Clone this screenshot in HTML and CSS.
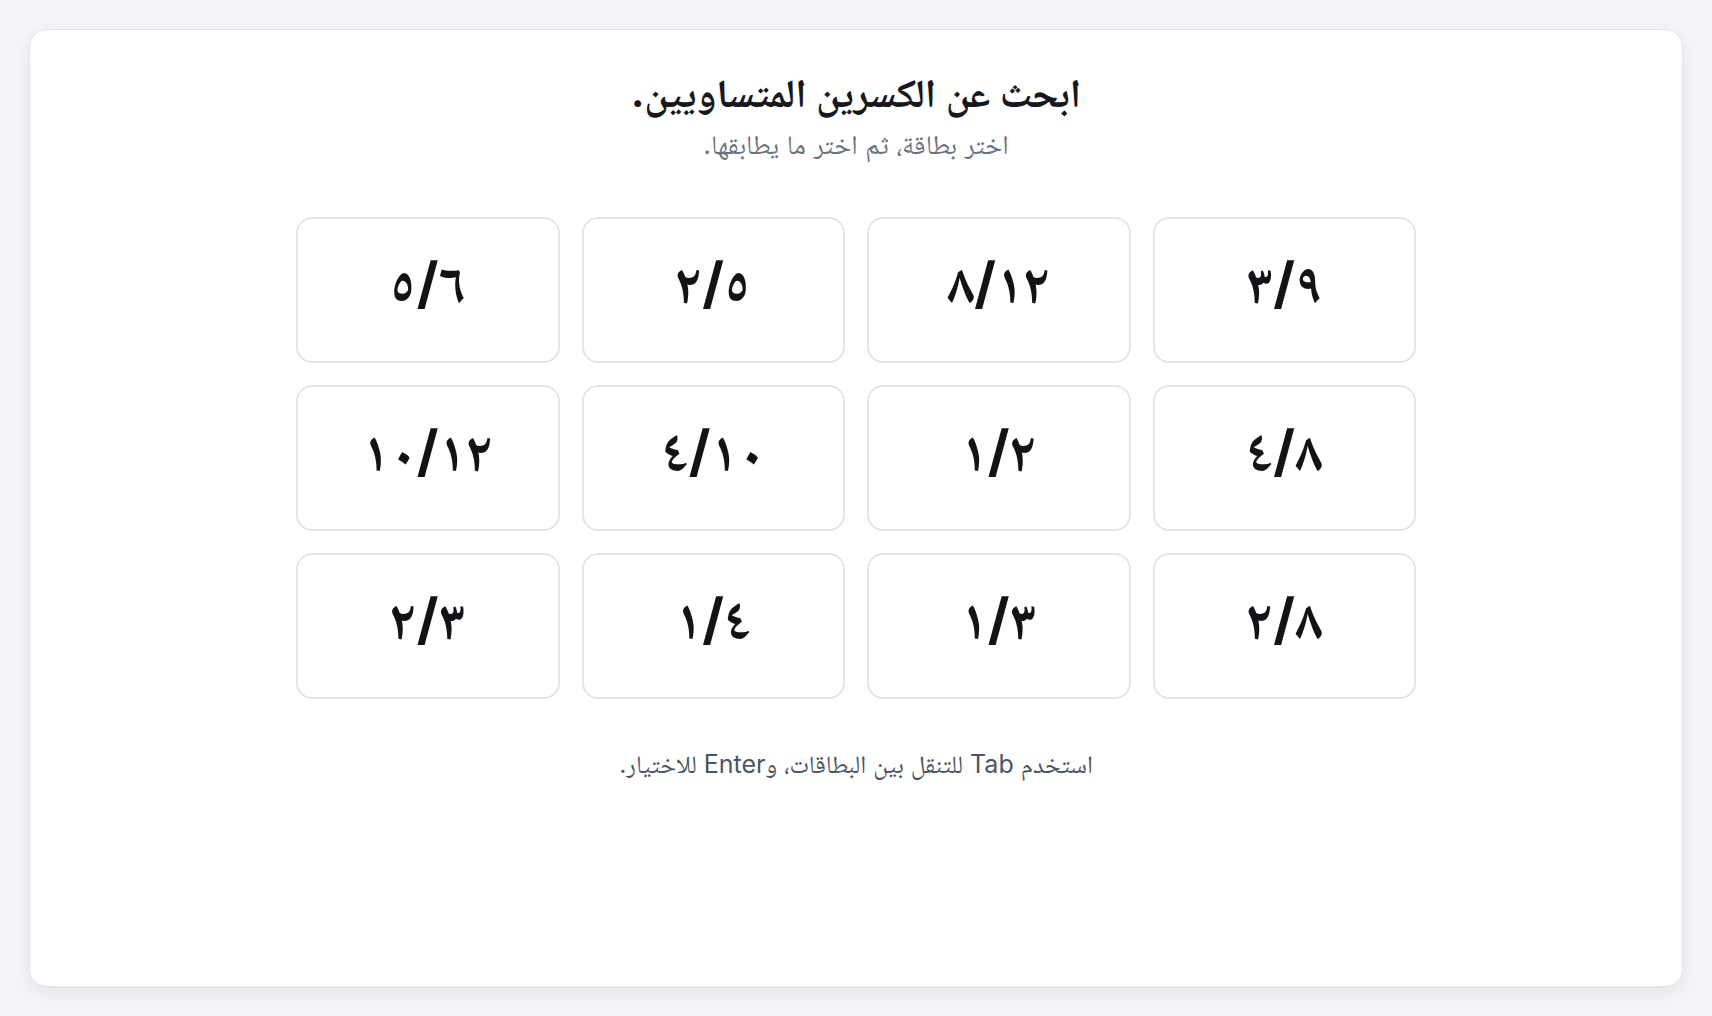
FILE: index.html
```html
<!DOCTYPE html>
<html lang="ar" dir="rtl">
<head>
<meta charset="utf-8">
<title>ابحث عن الكسرين المتساويين</title>
<link rel="stylesheet" href="styles.css">
</head>
<body>
<main class="panel">
  <h1 class="title">ابحث عن الكسرين المتساويين.</h1>
  <p class="subtitle">اختر بطاقة، ثم اختر ما يطابقها.</p>
  <div class="grid">
    <button class="card">٣/٩</button>
    <button class="card">٨/١٢</button>
    <button class="card">٢/٥</button>
    <button class="card">٥/٦</button>
    <button class="card">٤/٨</button>
    <button class="card">١/٢</button>
    <button class="card">٤/١٠</button>
    <button class="card">١٠/١٢</button>
    <button class="card">٢/٨</button>
    <button class="card">١/٣</button>
    <button class="card">١/٤</button>
    <button class="card">٢/٣</button>
  </div>
  <p class="hint">استخدم Tab للتنقل بين البطاقات، وEnter للاختيار.</p>
</main>
</body>
</html>
```
FILE: styles.css
```css
* { box-sizing: border-box; }
html, body { height: 100%; }
body {
  margin: 0;
  padding: 29px;
  background: #f3f4f7;
  font-family: Inter, "Noto Naskh Arabic", "Noto Sans Arabic", "DejaVu Sans", sans-serif;
  color: #15171c;
}
.panel {
  height: 100%;
  background: #ffffff;
  border: 1px solid #e3e5ea;
  border-radius: 18px;
  box-shadow: 0 6px 16px rgba(20, 24, 40, 0.06);
  padding: 39px 40px 40px;
  display: flex;
  flex-direction: column;
  align-items: center;
}
.title {
  margin: 0;
  font-size: 40px;
  line-height: 48px;
  font-weight: 700;
  color: #16181d;
}
.subtitle {
  margin: 12px 0 0;
  font-size: 27px;
  line-height: 32px;
  color: #6b7280;
}
.grid {
  margin-top: 56px;
  width: 1120px;
  display: grid;
  grid-template-columns: repeat(4, 1fr);
  column-gap: 22px;
  row-gap: 22px;
}
.card {
  height: 146px;
  background: #ffffff;
  border: 2px solid #e3e5ea;
  border-radius: 16px;
  display: flex;
  align-items: center;
  justify-content: center;
  padding: 0 0 14px;
  font-family: inherit;
  font-size: 56px;
  line-height: 1;
  font-weight: 700;
  color: #111317;
  cursor: pointer;
}
.hint {
  margin: 50px 0 0;
  font-size: 25px;
  line-height: 30px;
  color: #4b5563;
}
```
